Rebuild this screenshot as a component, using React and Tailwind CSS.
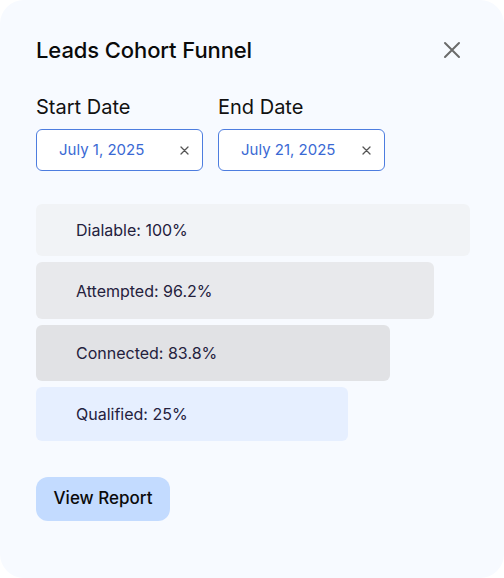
import React from 'react';

const stages = [
  { label: 'Dialable: 100%', w: 'w-[434px]', h: 'h-[52px]', bg: 'bg-[#f1f3f6]' },
  { label: 'Attempted: 96.2%', w: 'w-[398px]', h: 'h-[57px]', bg: 'bg-[#e8e9ec]' },
  { label: 'Connected: 83.8%', w: 'w-[354px]', h: 'h-[56px]', bg: 'bg-[#e1e2e5]' },
  { label: 'Qualified: 25%', w: 'w-[312px]', h: 'h-[54px]', bg: 'bg-[#e6efff]' },
];

function DateField({ label, value }) {
  return (
    <div className="flex flex-col">
      <span className="text-[20px] leading-[24px] text-[#111]">{label}</span>
      <div className="mt-[10px] w-[167px] h-[42px] rounded-[6px] border border-[#4d7ddf] bg-white flex items-center pl-[22px] pr-[13px]">
        <span className="flex-1 text-[15px] text-[#3a69d4]">{value}</span>
        <svg width="9" height="9" viewBox="0 0 9 9" className="text-[#555]">
          <path d="M1 1L8 8M8 1L1 8" stroke="currentColor" strokeWidth="1.3" strokeLinecap="round" />
        </svg>
      </div>
    </div>
  );
}

export default function App() {
  return (
    <div className="w-[504px] h-[578px] bg-white" style={{ fontFamily: 'Inter, "Noto Sans", sans-serif' }}>
      <div className="w-full h-full bg-[#f7faff] rounded-3xl px-[36px] pt-[37px]">
        <div className="flex items-center justify-between h-[26px]">
          <h1 className="text-[22px] font-medium text-[#0a0a0a] tracking-[-0.1px]">Leads Cohort Funnel</h1>
          <svg width="18" height="18" viewBox="0 0 18 18" className="mr-[7px] text-[#6b6b6b]">
            <path d="M2 2L16 16M16 2L2 16" stroke="currentColor" strokeWidth="2" strokeLinecap="round" />
          </svg>
        </div>

        <div className="flex gap-[15px] mt-[32px]">
          <DateField label="Start Date" value="July 1, 2025" />
          <DateField label="End Date" value="July 21, 2025" />
        </div>

        <div className="mt-[33px] flex flex-col gap-[6px]">
          {stages.map((s) => (
            <div key={s.label} className={`${s.w} ${s.h} ${s.bg} rounded-[6px] flex items-center pl-[40px]`}>
              <span className="text-[16px] text-[#24213d]">{s.label}</span>
            </div>
          ))}
        </div>

        <button className="mt-[36px] w-[134px] h-[44px] rounded-[12px] bg-[#c3dbff] text-[17px] font-medium text-[#0a0a0a]">
          View Report
        </button>
      </div>
    </div>
  );
}
